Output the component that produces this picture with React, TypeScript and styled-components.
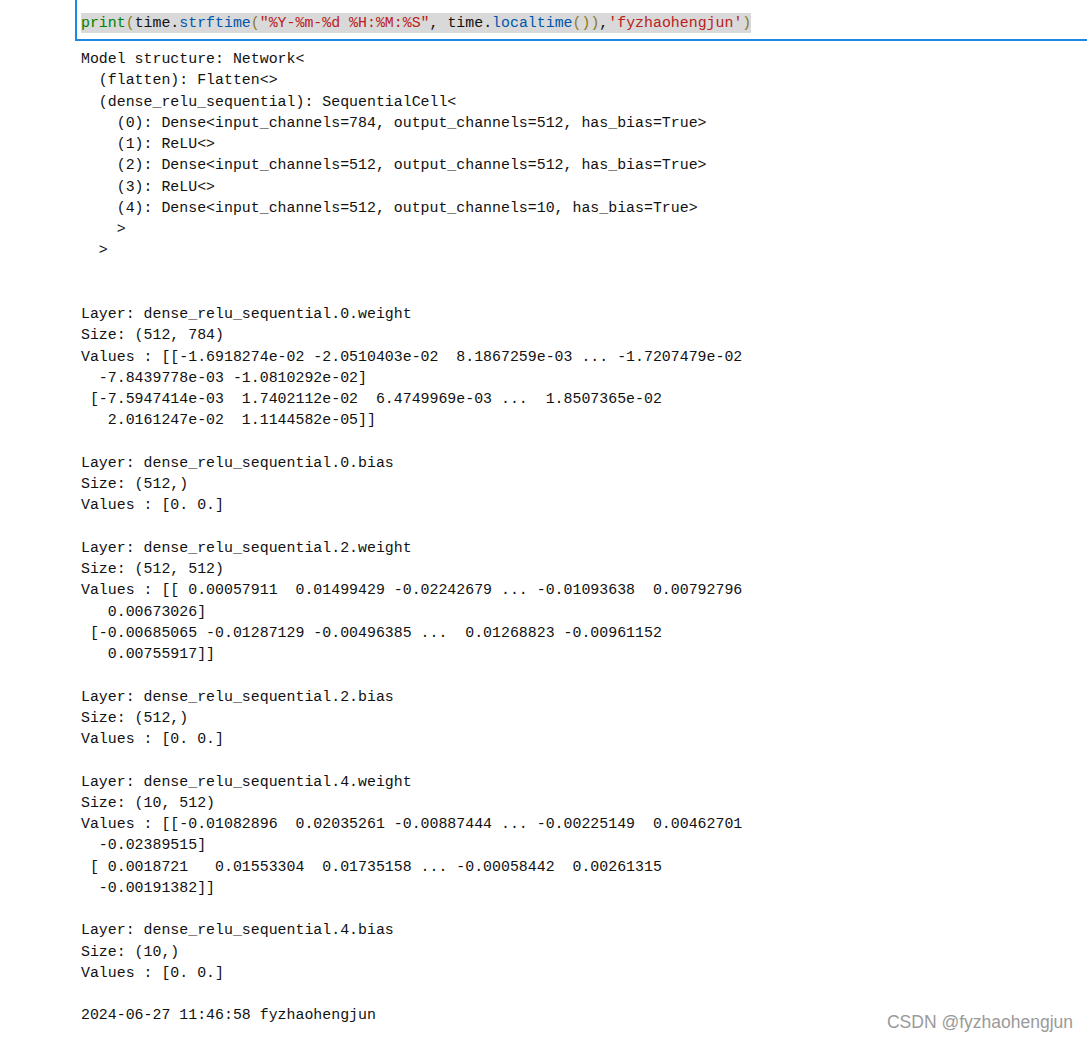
import React from 'react';
import styled, { createGlobalStyle } from 'styled-components';

const GlobalStyle = createGlobalStyle`
  html, body {
    margin: 0;
    padding: 0;
    background: #ffffff;
  }
`;

const Page = styled.div`
  position: relative;
  width: 1087px;
  height: 1042px;
  overflow: hidden;
  background: #ffffff;
  padding-left: 75px;
  box-sizing: border-box;
`;

const Cell = styled.div`
  height: 41px;
  box-sizing: border-box;
  border-left: 2px solid #1e88e5;
  border-bottom: 2px solid #1e88e5;
  padding: 13px 0 0 4px;
`;

const CodeLine = styled.span`
  display: inline-block;
  background: #d9d9d9;
  font-family: 'Liberation Mono', 'DejaVu Sans Mono', monospace;
  font-size: 14.9px;
  line-height: 20px;
  white-space: pre;
  color: #000000;
`;

const Tok = styled.span<{ $kind: 'builtin' | 'prop' | 'str' | 'bracket' | 'plain' }>`
  color: ${p =>
    p.$kind === 'builtin'
      ? '#008000'
      : p.$kind === 'prop'
        ? '#0055aa'
        : p.$kind === 'str'
          ? '#ba2121'
          : p.$kind === 'bracket'
            ? '#8a7a2a'
            : '#111111'};
`;

const Output = styled.pre`
  margin: 8px 0 0 6px;
  font-family: 'Liberation Mono', 'DejaVu Sans Mono', monospace;
  font-size: 14.9px;
  line-height: 21.25px;
  color: #111111;
`;

const Watermark = styled.div`
  position: absolute;
  right: 14px;
  bottom: 9px;
  font-family: 'Liberation Sans', Arial, sans-serif;
  font-size: 17.5px;
  color: #9a9a9a;
  text-shadow: 0 0 1px #ffffff;
`;

const outputText = `Model structure: Network<
  (flatten): Flatten<>
  (dense_relu_sequential): SequentialCell<
    (0): Dense<input_channels=784, output_channels=512, has_bias=True>
    (1): ReLU<>
    (2): Dense<input_channels=512, output_channels=512, has_bias=True>
    (3): ReLU<>
    (4): Dense<input_channels=512, output_channels=10, has_bias=True>
    >
  >


Layer: dense_relu_sequential.0.weight
Size: (512, 784)
Values : [[-1.6918274e-02 -2.0510403e-02  8.1867259e-03 ... -1.7207479e-02
  -7.8439778e-03 -1.0810292e-02]
 [-7.5947414e-03  1.7402112e-02  6.4749969e-03 ...  1.8507365e-02
   2.0161247e-02  1.1144582e-05]]

Layer: dense_relu_sequential.0.bias
Size: (512,)
Values : [0. 0.]

Layer: dense_relu_sequential.2.weight
Size: (512, 512)
Values : [[ 0.00057911  0.01499429 -0.02242679 ... -0.01093638  0.00792796
   0.00673026]
 [-0.00685065 -0.01287129 -0.00496385 ...  0.01268823 -0.00961152
   0.00755917]]

Layer: dense_relu_sequential.2.bias
Size: (512,)
Values : [0. 0.]

Layer: dense_relu_sequential.4.weight
Size: (10, 512)
Values : [[-0.01082896  0.02035261 -0.00887444 ... -0.00225149  0.00462701
  -0.02389515]
 [ 0.0018721   0.01553304  0.01735158 ... -0.00058442  0.00261315
  -0.00191382]]

Layer: dense_relu_sequential.4.bias
Size: (10,)
Values : [0. 0.]

2024-06-27 11:46:58 fyzhaohengjun`;

export default function App() {
  return (
    <Page>
      <GlobalStyle />
      <Cell>
        <CodeLine>
          <Tok $kind="builtin">print</Tok>
          <Tok $kind="bracket">(</Tok>
          <Tok $kind="plain">time.</Tok>
          <Tok $kind="prop">strftime</Tok>
          <Tok $kind="bracket">(</Tok>
          <Tok $kind="str">"%Y-%m-%d %H:%M:%S"</Tok>
          <Tok $kind="plain">, time.</Tok>
          <Tok $kind="prop">localtime</Tok>
          <Tok $kind="bracket">())</Tok>
          <Tok $kind="plain">,</Tok>
          <Tok $kind="str">'fyzhaohengjun'</Tok>
          <Tok $kind="bracket">)</Tok>
        </CodeLine>
      </Cell>
      <Output>{outputText}</Output>
      <Watermark>CSDN @fyzhaohengjun</Watermark>
    </Page>
  );
}
